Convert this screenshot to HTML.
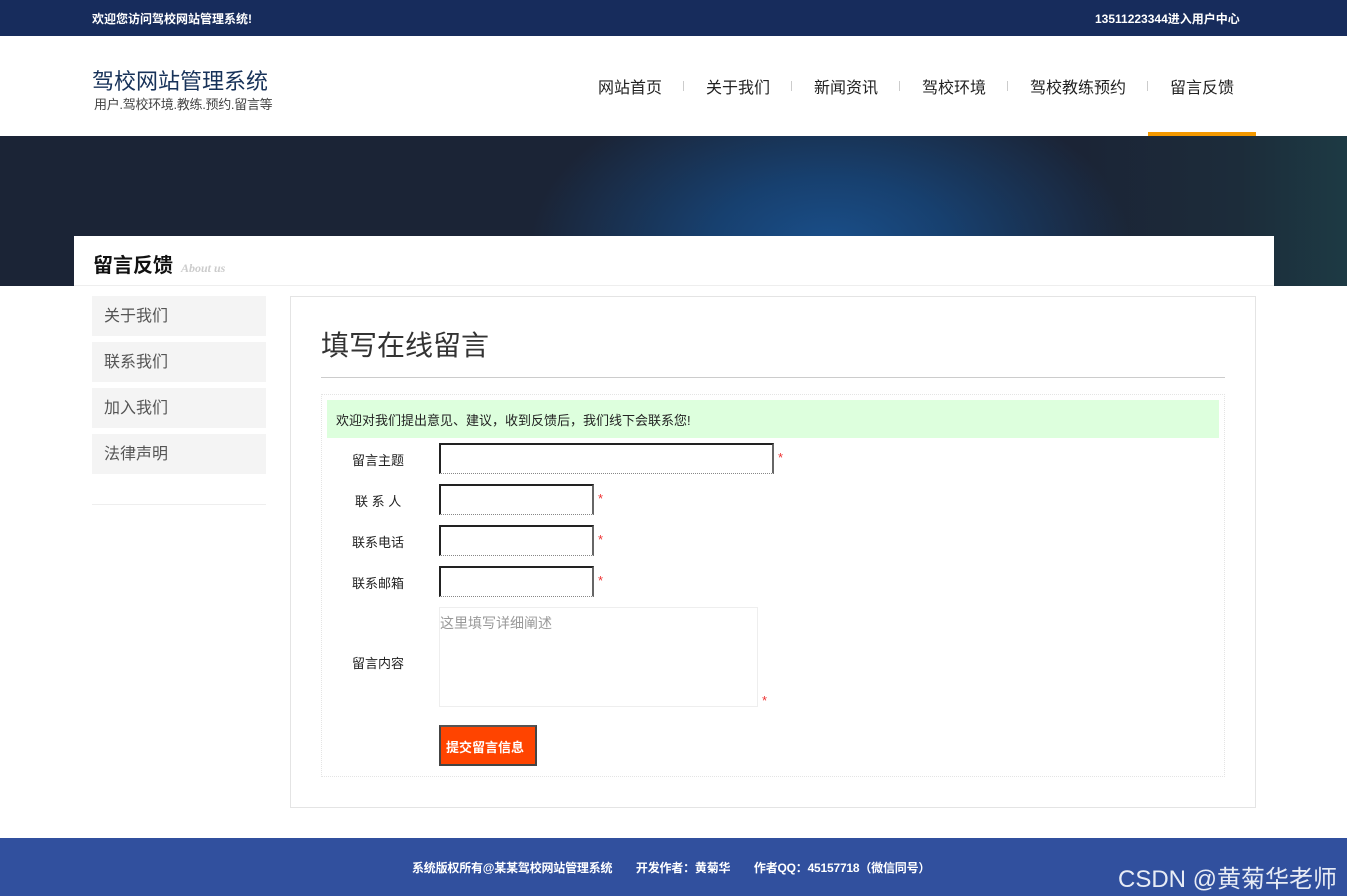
<!DOCTYPE html>
<html><head><meta charset="utf-8"><style>
*{margin:0;padding:0;box-sizing:border-box}
body{width:1347px;height:896px;position:relative;font-family:"Liberation Sans","Noto Sans CJK SC",sans-serif;background:#fff;overflow:hidden;color:#333}
.abs{position:absolute}
.top{left:0;top:0;width:1347px;height:36px;background:#172c5c;color:#fff;font-size:12px;font-weight:bold}
.nav a{position:absolute;top:74px;font-size:16px;color:#222;white-space:nowrap}
.sep{position:absolute;top:81px;width:1px;height:10px;background:#ccc}
.banner{left:0;top:136px;width:1347px;height:150px;background:radial-gradient(ellipse 300px 170px at 830px 110px,#1a4f8a 0%,#17406f 40%,rgba(27,36,54,0) 100%),linear-gradient(90deg,#1b2436 0%,#1b2436 80%,#1c2c3a 92%,#1d3a44 100%)}
.side div{position:absolute;left:92px;width:174px;height:40px;background:#f4f4f4;font-size:16px;color:#555;padding:11px 12px;line-height:20px}
.lbl{position:absolute;font-size:13px;color:#222;left:352px}
.inp{position:absolute;left:439px;border-top:2px solid #222;border-left:2px solid #222;border-right:2px solid #666;border-bottom:1px dotted #888;height:31px}
.star{position:absolute;color:#e33;font-size:13px}
</style></head><body>
<div class="abs top"><span class="abs" style="left:92px;top:10px">欢迎您访问驾校网站管理系统!</span><span class="abs" style="left:1095px;top:10px">13511223344进入用户中心</span></div>
<div class="abs" style="left:92px;top:64px;font-size:22px;color:#173259">驾校网站管理系统</div>
<div class="abs" style="left:94px;top:94px;font-size:13px;color:#444;letter-spacing:-0.3px">用户.驾校环境.教练.预约.留言等</div>
<div class="nav">
<a style="left:598px">网站首页</a><span class="sep" style="left:683px"></span>
<a style="left:706px">关于我们</a><span class="sep" style="left:791px"></span>
<a style="left:814px">新闻资讯</a><span class="sep" style="left:899px"></span>
<a style="left:922px">驾校环境</a><span class="sep" style="left:1007px"></span>
<a style="left:1030px">驾校教练预约</a><span class="sep" style="left:1147px"></span>
<a style="left:1170px">留言反馈</a>
</div>
<div class="abs" style="left:1148px;top:132px;width:108px;height:4px;background:#f39800"></div>
<div class="abs banner"></div>
<div class="abs" style="left:74px;top:236px;width:1200px;height:50px;background:#fff;border-bottom:1px solid #eee"></div>
<div class="abs" style="left:93px;top:249px;font-size:20px;font-weight:bold;color:#111">留言反馈</div>
<div class="abs" style="left:181px;top:261px;font-size:12px;font-style:italic;font-weight:bold;color:#ccc;font-family:'Liberation Serif',serif">About us</div>
<div class="side"><div style="top:296px">关于我们</div><div style="top:342px">联系我们</div><div style="top:388px">加入我们</div><div style="top:434px">法律声明</div></div>
<div class="abs" style="left:92px;top:504px;width:174px;height:1px;background:#eee"></div>
<div class="abs" style="left:290px;top:296px;width:966px;height:512px;border:1px solid #e4e4e4"></div>
<div class="abs" style="left:321px;top:324px;font-size:28px;color:#333">填写在线留言</div>
<div class="abs" style="left:321px;top:377px;width:904px;height:1px;background:#ccc"></div>
<div class="abs" style="left:321px;top:394px;width:904px;height:383px;border:1px dotted #e4e4e4"></div>
<div class="abs" style="left:327px;top:400px;width:892px;height:38px;background:#ddffdd;font-size:13px;color:#222;padding:10px 9px">欢迎对我们提出意见、建议，收到反馈后，我们线下会联系您!</div>
<div class="lbl" style="top:450px">留言主题</div><div class="inp" style="top:443px;width:335px"></div><span class="star" style="left:778px;top:450px">*</span>
<div class="lbl" style="top:491px;left:355px">联 系 人</div><div class="inp" style="top:484px;width:155px"></div><span class="star" style="left:598px;top:491px">*</span>
<div class="lbl" style="top:532px">联系电话</div><div class="inp" style="top:525px;width:155px"></div><span class="star" style="left:598px;top:532px">*</span>
<div class="lbl" style="top:573px">联系邮箱</div><div class="inp" style="top:566px;width:155px"></div><span class="star" style="left:598px;top:573px">*</span>
<div class="lbl" style="top:653px">留言内容</div>
<div class="abs" style="left:439px;top:607px;width:319px;height:100px;border:1px solid #eee;font-size:14px;color:#999;padding:5px 0 0 0">这里填写详细阐述</div>
<span class="star" style="left:762px;top:693px">*</span>
<div class="abs" style="left:439px;top:725px;width:98px;height:41px;background:#ff4400;border:2px solid #444;border-top-color:#555;color:#fff;font-size:13px;font-weight:bold;padding:10px 5px">提交留言信息</div>
<div class="abs" style="left:0;top:838px;width:1347px;height:58px;background:#31509e;color:#fff;font-size:12px;font-weight:bold"><span class="abs" style="left:412px;top:21px;white-space:nowrap;letter-spacing:-0.2px">系统版权所有@某某驾校网站管理系统　　开发作者：黄菊华　　作者QQ：45157718（微信同号）</span>
<span class="abs" style="left:1118px;top:21px;font-size:24px;font-weight:normal;color:#e8ecf5;white-space:nowrap">CSDN @黄菊华老师</span></div>
</body></html>
